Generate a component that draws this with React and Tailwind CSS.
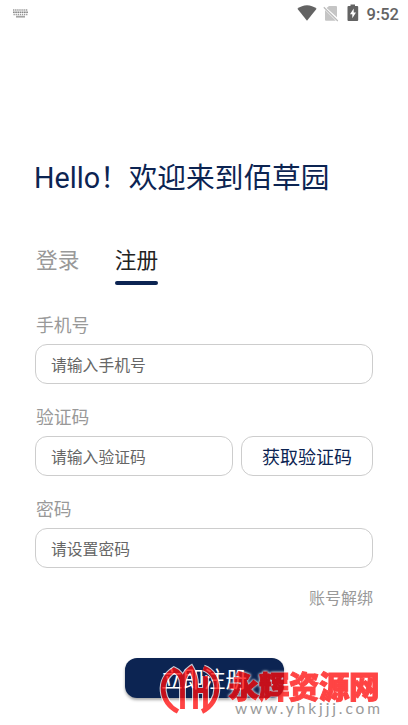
import React from 'react';

function StatusBar() {
  return (
    <header className="flex h-7 items-start justify-between pl-[13px] pr-[9px]">
      <svg className="mt-[9px] h-[9px] w-[15px]" viewBox="0 0 15 9" fill="none">
        <path d="M0 1H15" stroke="#999" strokeWidth="1.4" strokeDasharray="1.4 .7" />
        <path d="M0 3.3H15" stroke="#888" strokeWidth="1.4" strokeDasharray="1.7 .5" />
        <path d="M.5 5.5H15" stroke="#999" strokeWidth="1.4" strokeDasharray="1.3 .8" />
        <path d="M3 7.7H12" stroke="#a5a5a5" strokeWidth="1.8" />
      </svg>
      <div className="flex items-start">
        <svg className="mt-[5px] h-4 w-5" viewBox="0 0 20 16">
          <path d="M.4 3.7C6-1 14-1 19.6 3.7L10 15.7Z" fill="#636363" />
        </svg>
        <svg className="ml-[6px] mt-[5px] h-[17px] w-4" viewBox="0 0 16 17">
          <path d="M6 1H13Q14 1 14 2V12.2L3.6 2.9ZM2 5L12.8 15.7H3Q2 15.7 2 14.7Z" fill="#c5c5c5" />
          <path d="M.8 2.2L14.8 16" stroke="#bbb" strokeWidth="1.2" />
        </svg>
        <svg className="ml-[8px] mt-[4px] h-[18px] w-3" viewBox="0 0 12 18">
          <path d="M3.5 .5H8V2H10.2Q11.2 2 11.2 3V16Q11.2 17 10.2 17H1.5Q.5 17 .5 16V3Q.5 2 1.5 2H3.5Z" fill="#636363" />
          <path d="M6.7 4.5L3 10.3H5.3V14.3L9 8.4H6.7Z" fill="white" />
        </svg>
        <span className="ml-[8px] mt-[5px] font-[Roboto] text-[16.5px] font-medium leading-5 text-[#636363]">9:52</span>
      </div>
    </header>
  );
}

function Field({ label, placeholder, children }) {
  return (
    <div className="mb-[18px]">
      <label className="block h-[34px] pl-px text-[17.8px] leading-[28px] text-[#999]">{label}</label>
      <div className="flex gap-2">
        <input
          className="h-10 min-w-0 flex-1 rounded-xl border border-[#cdcdcd] bg-white px-[15px] text-[15.8px] outline-none placeholder:text-[#666]"
          placeholder={placeholder}
        />
        {children}
      </div>
    </div>
  );
}

function Emblem() {
  return (
    <>
      <path d="M178 711.500C160 702 158 680 174 670Q182 673 182.500 684V709" />
      <path d="M182.500 685Q184 673 191 668.500Q195.500 676 195.500 685V709" />
      <path d="M195.500 690.500H205.500M205.500 676V709" />
      <path d="M203.500 668C221 674 222 702 202 711.500" />
    </>
  );
}

function Watermark() {
  return (
    <div className="pointer-events-none absolute inset-0">
      <svg className="h-[725px] w-[408px]" viewBox="0 0 408 725" fill="none">
        <g opacity=".76">
          <g stroke="#fff" strokeWidth="7"><Emblem /></g>
          <g stroke="#ff0a0a" strokeWidth="4.800"><Emblem /></g>
          <g className="[filter:drop-shadow(0_0_1px_white)_drop-shadow(0_0_1px_white)]">
            <text
              x="228.500"
              y="697.500"
              className="font-['Noto_Sans_CJK_SC',sans-serif] text-[30.5px] font-black"
              fill="#ff0a0a"
              stroke="#ff0a0a"
              strokeWidth="1"
              textLength="151"
            >
              永辉资源网
            </text>
          </g>
        </g>
        <text x="235" y="713.500" className="font-[Lato] text-[15.5px]" fill="#999" textLength="145">www.yhkjjj.com</text>
      </svg>
    </div>
  );
}

export default function App() {
  return (
    <div className="relative h-[725px] w-[408px] overflow-hidden bg-white font-['Noto_Sans_CJK_SC',sans-serif]">
      <StatusBar />
      <main className="px-[35px] pt-[127px]">
        <h1 className="-ml-px h-11 whitespace-nowrap font-[Roboto,'Noto_Sans_CJK_SC',sans-serif] text-[28.7px] leading-[46px] text-[#0c2452]">Hello！欢迎来到佰草园</h1>
        <nav className="mt-[43px] flex h-[43px] gap-9 pl-px text-[21.7px] leading-[34px]">
          <button className="flex flex-col text-[#999]">登录</button>
          <button className="flex flex-col text-[#222]">
            <span className="-ml-px">注册</span>
            <span className="mt-[5px] h-1 w-[43px] rounded-full bg-[#0c2452]" />
          </button>
        </nav>
        <form className="mt-[25px]">
          <Field label="手机号" placeholder="请输入手机号" />
          <Field label="验证码" placeholder="请输入验证码">
            <button type="button" className="h-10 w-[132px] rounded-xl border border-[#cdcdcd] text-[18px] text-[#0c2452]">获取验证码</button>
          </Field>
          <Field label="密码" placeholder="请设置密码" />
          <div className="flex h-6 justify-end text-[16px] leading-[22px] text-[#999]">账号解绑</div>
          <button type="button" className="mx-auto mt-12 block h-10 w-[159px] rounded-xl bg-[#0c2452] text-[21.4px] leading-[38px] text-white shadow-[0_2px_3px_rgba(0,0,0,0.35)]">立即注册</button>
        </form>
      </main>
      <Watermark />
    </div>
  );
}
